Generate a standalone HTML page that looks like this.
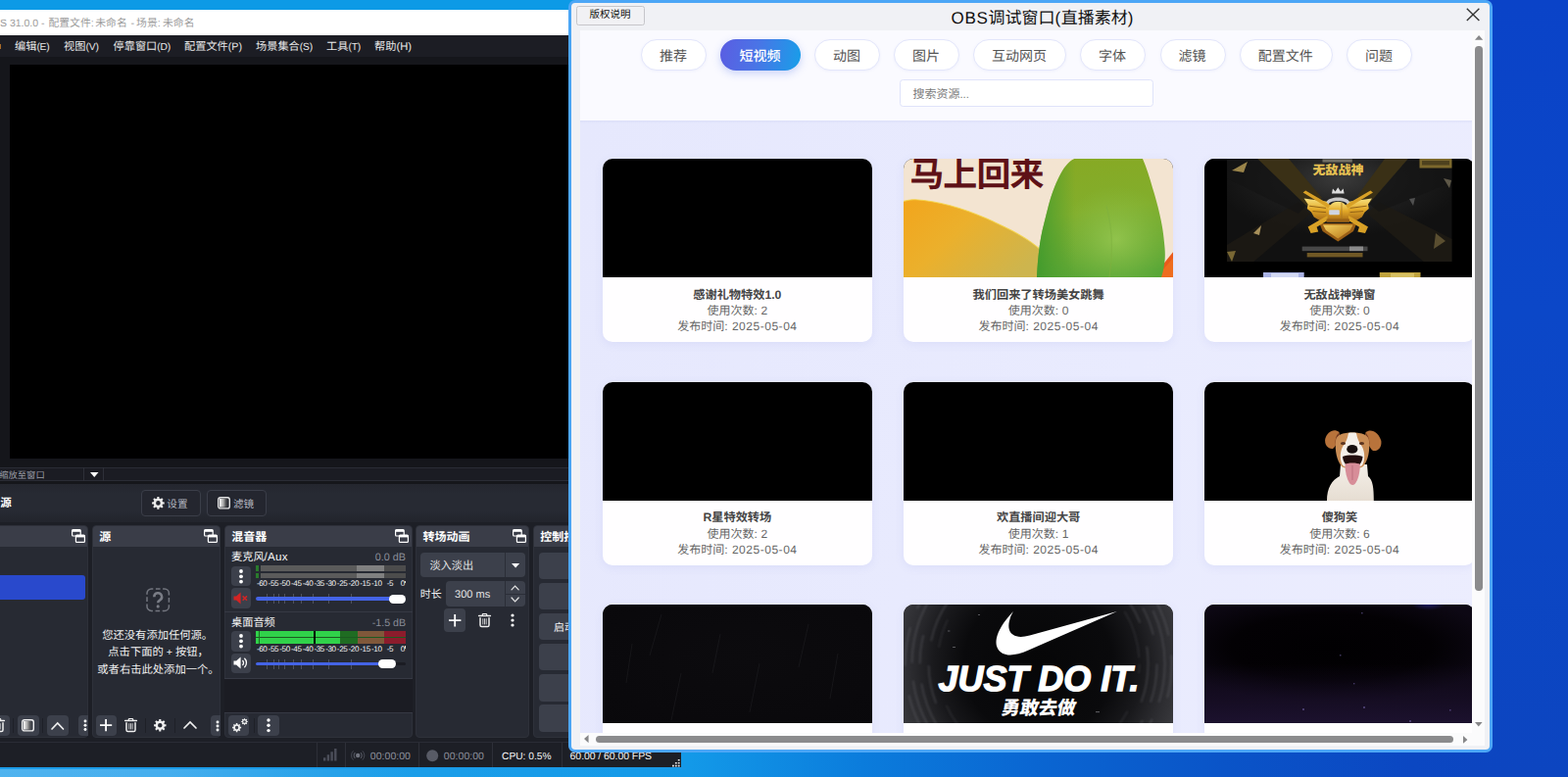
<!DOCTYPE html><html lang="zh"><head><meta charset="utf-8"><title>OBS</title><style>
html,body{margin:0;padding:0}
body{width:1600px;height:793px;overflow:hidden;position:relative;font-family:"Liberation Sans","Noto Sans CJK SC",sans-serif;background:#0b41c4;text-rendering:geometricPrecision}
div{position:absolute;box-sizing:content-box}
.t{white-space:nowrap;overflow:visible}
svg.a{position:absolute;overflow:visible}
</style></head><body><div style="left:0px;top:0px;width:1600px;height:793px;background:linear-gradient(90deg,#1a9fe8 0,#1399e8 44%,#0b7cdc 55%,#0a66d2 66%,#0a54c8 78%,#0b47c2 90%,#0c44c0 100%)"></div><div style="left:0px;top:0px;width:700px;height:12px;background:#0d9ae6"></div><div style="left:1500px;top:0px;width:100px;height:793px;background:linear-gradient(#0a43c8,#0b47c8 40%,#0c45c0)"></div><div style="left:0px;top:783px;width:700px;height:10px;background:linear-gradient(90deg,#4fb3ef 0,#45aeee 25%,#2aa3ea 45%,#1b9ee9 60%,#1399e8 100%)"></div><div style="left:0px;top:783px;width:700px;height:2px;background:linear-gradient(90deg,#1c9ce8,#1898e6)"></div><div style="left:0px;top:10px;width:695px;height:773px;background:#1d1f26"></div><div style="left:0px;top:10px;width:695px;height:26px;background:#fff"></div><div class="t" style="top:16.038px;height:16px;line-height:16px;font-size:10.85px;color:#9c9c9c;left:0px;"><span style="font-size:10.517px;">S 31.0.0 -</span></div><div class="t" style="top:16.038px;height:16px;line-height:16px;font-size:10.85px;color:#9c9c9c;left:49.4px;">配置文件:</div><div class="t" style="top:16.038px;height:16px;line-height:16px;font-size:10.85px;color:#9c9c9c;left:97.2px;">未命名</div><div class="t" style="top:16.038px;height:16px;line-height:16px;font-size:10.85px;color:#9c9c9c;left:133.6px;">-</div><div class="t" style="top:16.038px;height:16px;line-height:16px;font-size:10.85px;color:#9c9c9c;left:139.1px;">场景:</div><div class="t" style="top:16.038px;height:16px;line-height:16px;font-size:10.85px;color:#9c9c9c;left:166px;">未命名</div><div style="left:0px;top:36px;width:695px;height:21.5px;background:#1c1d24"></div><div style="left:0px;top:44.5px;width:1px;height:5px;background:#a86a28"></div><div class="t" style="top:39.975px;height:17px;line-height:17px;font-size:11.2px;color:#e8e8e8;left:15px;">编辑<span style="letter-spacing:-0.212px;font-size:10.304px;">(E)</span></div><div class="t" style="top:39.975px;height:17px;line-height:17px;font-size:11.2px;color:#e8e8e8;left:65px;">视图<span style="letter-spacing:-0.046px;font-size:10.304px;">(V)</span></div><div class="t" style="top:39.975px;height:17px;line-height:17px;font-size:11.2px;color:#e8e8e8;left:115.5px;">停靠窗口<span style="letter-spacing:-0.202px;font-size:10.304px;">(D)</span></div><div class="t" style="top:39.975px;height:17px;line-height:17px;font-size:11.2px;color:#e8e8e8;left:188px;">配置文件<span style="font-size:10.652px;">(P)</span></div><div class="t" style="top:39.975px;height:17px;line-height:17px;font-size:11.2px;color:#e8e8e8;left:261px;">场景集合<span style="letter-spacing:-0.179px;font-size:10.304px;">(S)</span></div><div class="t" style="top:39.975px;height:17px;line-height:17px;font-size:11.2px;color:#e8e8e8;left:333px;">工具<span style="letter-spacing:-0.186px;font-size:10.304px;">(T)</span></div><div class="t" style="top:39.975px;height:17px;line-height:17px;font-size:11.2px;color:#e8e8e8;left:382px;">帮助<span style="letter-spacing:0.017px;">(H)</span></div><div style="left:0px;top:57.5px;width:695px;height:436px;background:#15161b"></div><div style="left:10px;top:65.5px;width:600px;height:402.5px;background:#000"></div><div style="left:0px;top:477px;width:695px;height:13.5px;background:#1b1c23;border-top:1px solid #2a2c35;border-bottom:1px solid #2a2c35;box-sizing:border-box"></div><div style="left:85px;top:477px;width:1px;height:13.5px;background:#2e3039"></div><div style="left:105px;top:477px;width:1px;height:13.5px;background:#2e3039"></div><div class="t" style="top:477.562px;height:15px;line-height:15px;font-size:9.3px;color:#9a9ca6;left:-0.8px;">缩放至窗口</div><svg class="a" style="left:91.5px;top:481.8px" width="8.5" height="5" viewBox="0 0 8.5 5"><path d="M0 0H8.5L4.25 5Z" fill="#fff"/></svg><div style="left:0px;top:493.5px;width:695px;height:39px;background:linear-gradient(#24262e,#272a33 25%,#272a33 70%,#22242c)"></div><div class="t" style="top:506.035px;height:17px;line-height:17px;font-size:11.5px;color:#fff;left:0.3px;"><span style="font-weight:bold">源</span></div><div style="left:143.5px;top:499.5px;width:61.3px;height:27.3px;border:1px solid #3b3e49;border-radius:4px;box-sizing:border-box;background:#24262f"></div><div style="left:211px;top:499.5px;width:61.3px;height:27.3px;border:1px solid #3b3e49;border-radius:4px;box-sizing:border-box;background:#24262f"></div><svg class="a" style="left:153.6px;top:506px" width="14.8" height="14.8" viewBox="0 0 14.8 14.8"><path fill-rule="evenodd" fill="#ececec" d="M11.99 6.25 L13.72 6.40 L13.72 8.40 L11.99 8.55 L11.46 9.83 L12.58 11.16 L11.16 12.58 L9.83 11.46 L8.55 11.99 L8.40 13.72 L6.40 13.72 L6.25 11.99 L4.97 11.46 L3.64 12.58 L2.22 11.16 L3.34 9.83 L2.81 8.55 L1.08 8.40 L1.08 6.40 L2.81 6.25 L3.34 4.97 L2.22 3.64 L3.64 2.22 L4.97 3.34 L6.25 2.81 L6.40 1.08 L8.40 1.08 L8.55 2.81 L9.83 3.34 L11.16 2.22 L12.58 3.64 L11.46 4.97Z M5.10 7.40 a2.30 2.30 0 1 0 4.61 0 a2.30 2.30 0 1 0 -4.61 0Z"/></svg><div class="t" style="top:506.655px;height:16px;line-height:16px;font-size:10.6px;color:#b4b7c0;left:170.3px;">设置</div><svg class="a" style="left:222px;top:507.1px" width="13" height="12.6" viewBox="0 0 13 12.6"><defs><linearGradient id="fg0" x1="0" x2="1"><stop offset="0" stop-color="#fff"/><stop offset=".5" stop-color="#999"/><stop offset="1" stop-color="#333" stop-opacity=".2"/></linearGradient></defs><rect x="2" y="2" width="9" height="8.6" fill="url(#fg0)"/><rect x=".7" y=".7" width="11.6" height="11.2" rx="2.2" fill="none" stroke="#e4e4e4" stroke-width="1.4"/></svg><div class="t" style="top:506.655px;height:16px;line-height:16px;font-size:10.6px;color:#b4b7c0;left:238px;">滤镜</div><div style="left:-10px;top:536px;width:100px;height:217.4px;background:#272a33;border-radius:4px;overflow:hidden;border:1px solid #2e313a;box-sizing:border-box"><div style="left:-1px;top:-1px;width:100px;height:22.3px;background:#3a3d48"></div></div><svg class="a" style="left:72.7px;top:540.2px" width="14" height="14" viewBox="0 0 14 14"><rect x=".6" y=".6" width="8.6" height="6.4" rx="1" fill="none" stroke="#fff" stroke-width="1.2"/><rect x=".6" y=".6" width="8.6" height="2.2" fill="#fff"/><rect x="4.4" y="6" width="9" height="7.4" rx="1" fill="#3a3d48" stroke="#fff" stroke-width="1.2"/><rect x="4.4" y="6" width="9" height="2.4" fill="#fff"/></svg><div style="left:94px;top:536px;width:131px;height:217.4px;background:#272a33;border-radius:4px;overflow:hidden;border:1px solid #2e313a;box-sizing:border-box"><div style="left:-1px;top:-1px;width:131px;height:22.3px;background:#3a3d48"></div></div><div class="t" style="top:538.602px;height:18px;line-height:18px;font-size:12px;color:#fff;left:101.3px;"><span style="font-weight:bold">源</span></div><svg class="a" style="left:207.7px;top:540.2px" width="14" height="14" viewBox="0 0 14 14"><rect x=".6" y=".6" width="8.6" height="6.4" rx="1" fill="none" stroke="#fff" stroke-width="1.2"/><rect x=".6" y=".6" width="8.6" height="2.2" fill="#fff"/><rect x="4.4" y="6" width="9" height="7.4" rx="1" fill="#3a3d48" stroke="#fff" stroke-width="1.2"/><rect x="4.4" y="6" width="9" height="2.4" fill="#fff"/></svg><div style="left:229px;top:536px;width:191.6px;height:217.4px;background:#272a33;border-radius:4px;overflow:hidden;border:1px solid #2e313a;box-sizing:border-box"><div style="left:-1px;top:-1px;width:191.6px;height:22.3px;background:#3a3d48"></div></div><div class="t" style="top:538.602px;height:18px;line-height:18px;font-size:12px;color:#fff;left:236.3px;"><span style="font-weight:bold">混音器</span></div><svg class="a" style="left:403.3px;top:540.2px" width="14" height="14" viewBox="0 0 14 14"><rect x=".6" y=".6" width="8.6" height="6.4" rx="1" fill="none" stroke="#fff" stroke-width="1.2"/><rect x=".6" y=".6" width="8.6" height="2.2" fill="#fff"/><rect x="4.4" y="6" width="9" height="7.4" rx="1" fill="#3a3d48" stroke="#fff" stroke-width="1.2"/><rect x="4.4" y="6" width="9" height="2.4" fill="#fff"/></svg><div style="left:424.3px;top:536px;width:115.7px;height:217.4px;background:#272a33;border-radius:4px;overflow:hidden;border:1px solid #2e313a;box-sizing:border-box"><div style="left:-1px;top:-1px;width:115.7px;height:22.3px;background:#3a3d48"></div></div><div class="t" style="top:538.602px;height:18px;line-height:18px;font-size:12px;color:#fff;left:431.6px;"><span style="font-weight:bold">转场动画</span></div><svg class="a" style="left:522.7px;top:540.2px" width="14" height="14" viewBox="0 0 14 14"><rect x=".6" y=".6" width="8.6" height="6.4" rx="1" fill="none" stroke="#fff" stroke-width="1.2"/><rect x=".6" y=".6" width="8.6" height="2.2" fill="#fff"/><rect x="4.4" y="6" width="9" height="7.4" rx="1" fill="#3a3d48" stroke="#fff" stroke-width="1.2"/><rect x="4.4" y="6" width="9" height="2.4" fill="#fff"/></svg><div style="left:544px;top:536px;width:160px;height:217.4px;background:#272a33;border-radius:4px;overflow:hidden;border:1px solid #2e313a;box-sizing:border-box"><div style="left:-1px;top:-1px;width:160px;height:22.3px;background:#3a3d48"></div></div><div class="t" style="top:538.602px;height:18px;line-height:18px;font-size:12px;color:#fff;left:551.3px;"><span style="font-weight:bold">控制按钮</span></div><div style="left:0px;top:587px;width:87px;height:24.5px;background:#2949cc;border-radius:0 3px 3px 0"></div><div style="left:-12px;top:729.7px;width:21.5px;height:21.4px;background:#3c404b;border-radius:4px"></div><svg class="a" style="left:-8px;top:732.95px" width="13" height="14.5" viewBox="0 0 13 14.5"><path d="M0.6 2.6H12.4" stroke="#f0f0f0" stroke-width="1.5" stroke-linecap="round"/><path d="M4.3 2.2V1.2a.7.7 0 0 1 .7-.7h3a.7.7 0 0 1 .7.7v1" fill="none" stroke="#f0f0f0" stroke-width="1.2"/><path d="M2 4.2V12a1.6 1.6 0 0 0 1.6 1.6h5.8A1.6 1.6 0 0 0 11 12V4.2" fill="none" stroke="#f0f0f0" stroke-width="1.5"/><path d="M4.8 5.2V11.4M6.5 5.2V11.4M8.2 5.2V11.4" stroke="#f0f0f0" stroke-width="1" opacity=".8"/></svg><div style="left:13px;top:733px;width:1px;height:14.5px;background:#1e2027"></div><div style="left:18.3px;top:729.7px;width:21.5px;height:21.4px;background:#3c404b;border-radius:4px"></div><svg class="a" style="left:22px;top:733.5px" width="13" height="12.6" viewBox="0 0 13 12.6"><defs><linearGradient id="fg1" x1="0" x2="1"><stop offset="0" stop-color="#fff"/><stop offset=".5" stop-color="#999"/><stop offset="1" stop-color="#333" stop-opacity=".2"/></linearGradient></defs><rect x="2" y="2" width="9" height="8.6" fill="url(#fg1)"/><rect x=".7" y=".7" width="11.6" height="11.2" rx="2.2" fill="none" stroke="#f0f0f0" stroke-width="1.4"/></svg><div style="left:43.3px;top:733px;width:1px;height:14.5px;background:#1e2027"></div><div style="left:48.3px;top:729.7px;width:21.5px;height:21.4px;background:#3c404b;border-radius:4px"></div><svg class="a" style="left:52.15px;top:736.5px" width="13.5" height="8" viewBox="0 0 13.5 8"><polyline points="1,7 6.75,1 12.5,7" fill="none" stroke="#f0f0f0" stroke-width="1.7" stroke-linecap="round" stroke-linejoin="miter"/></svg><div style="left:80.2px;top:729.7px;width:9.8px;height:21.4px;background:#3c404b;border-radius:4px 0 0 4px"></div><svg class="a" style="left:84.4px;top:733.05px" width="6" height="14.5" viewBox="0 0 6 14.5"><circle cx="3" cy="3" r="1.45" fill="#fff"/><circle cx="3" cy="7.25" r="1.45" fill="#fff"/><circle cx="3" cy="11.5" r="1.45" fill="#fff"/></svg><svg class="a" style="left:149px;top:600px" width="24.4" height="24.4" viewBox="0 0 24.4 24.4"><rect x="1" y="1" width="22.4" height="22.4" rx="4.5" fill="none" stroke="#73767f" stroke-width="1.5" stroke-dasharray="4.6 2.6 10.67 2.6" stroke-dashoffset="16.07"/><path d="M8.3 9.2a3.9 3.9 0 1 1 5.7 3.4c-1.3.7-1.8 1.3-1.8 2.7" fill="none" stroke="#7a7d86" stroke-width="2.5"/><circle cx="12.2" cy="18.9" r="1.55" fill="#7a7d86"/></svg><div class="t" style="top:640.729px;height:17px;line-height:17px;font-size:11.3px;color:#f0f0f0;left:104.2px;">您还没有添加任何源。</div><div class="t" style="top:658.229px;height:17px;line-height:17px;font-size:11.3px;color:#f0f0f0;left:110.3px;">点击下面的<span style="font-size:10.618px;"> + </span>按钮，</div><div class="t" style="top:675.729px;height:17px;line-height:17px;font-size:11.3px;color:#f0f0f0;left:99.3px;">或者右击此处添加一个。</div><div style="left:97.6px;top:729.7px;width:21.5px;height:21.4px;background:#3c404b;border-radius:4px"></div><svg class="a" style="left:102.1px;top:733.8px" width="12.2" height="12.2" viewBox="0 0 12.2 12.2"><path d="M6.1 0V12.2 M0 6.1H12.2" stroke="#fff" stroke-width="1.8"/></svg><svg class="a" style="left:127.1px;top:732.75px" width="13" height="14.5" viewBox="0 0 13 14.5"><path d="M0.6 2.6H12.4" stroke="#f0f0f0" stroke-width="1.5" stroke-linecap="round"/><path d="M4.3 2.2V1.2a.7.7 0 0 1 .7-.7h3a.7.7 0 0 1 .7.7v1" fill="none" stroke="#f0f0f0" stroke-width="1.2"/><path d="M2 4.2V12a1.6 1.6 0 0 0 1.6 1.6h5.8A1.6 1.6 0 0 0 11 12V4.2" fill="none" stroke="#f0f0f0" stroke-width="1.5"/><path d="M4.8 5.2V11.4M6.5 5.2V11.4M8.2 5.2V11.4" stroke="#f0f0f0" stroke-width="1" opacity=".8"/></svg><div style="left:148.3px;top:733px;width:1px;height:14.5px;background:#1e2027"></div><svg class="a" style="left:156.4px;top:732.9px" width="14.6" height="14.6" viewBox="0 0 14.6 14.6"><path fill-rule="evenodd" fill="#f0f0f0" d="M11.82 6.17 L13.52 6.31 L13.52 8.29 L11.82 8.43 L11.30 9.70 L12.40 11.00 L11.00 12.40 L9.70 11.30 L8.43 11.82 L8.29 13.52 L6.31 13.52 L6.17 11.82 L4.90 11.30 L3.60 12.40 L2.20 11.00 L3.30 9.70 L2.78 8.43 L1.08 8.29 L1.08 6.31 L2.78 6.17 L3.30 4.90 L2.20 3.60 L3.60 2.20 L4.90 3.30 L6.17 2.78 L6.31 1.08 L8.29 1.08 L8.43 2.78 L9.70 3.30 L11.00 2.20 L12.40 3.60 L11.30 4.90Z M5.03 7.30 a2.27 2.27 0 1 0 4.54 0 a2.27 2.27 0 1 0 -4.54 0Z"/></svg><div style="left:178px;top:733px;width:1px;height:14.5px;background:#1e2027"></div><svg class="a" style="left:187px;top:736.4px" width="14" height="8" viewBox="0 0 14 8"><polyline points="1,7 7,1 13,7" fill="none" stroke="#f0f0f0" stroke-width="1.7" stroke-linecap="round" stroke-linejoin="miter"/></svg><div style="left:215px;top:729.7px;width:10px;height:21.4px;background:#3c404b;border-radius:4px 0 0 4px"></div><svg class="a" style="left:219.2px;top:733.5px" width="6" height="14" viewBox="0 0 6 14"><circle cx="3" cy="3" r="1.45" fill="#fff"/><circle cx="3" cy="7" r="1.45" fill="#fff"/><circle cx="3" cy="11" r="1.45" fill="#fff"/></svg><div style="left:229px;top:624px;width:191.6px;height:1px;background:#363944"></div><div style="left:229px;top:691.5px;width:191.6px;height:1px;background:#363944"></div><div style="left:229px;top:692.5px;width:191.6px;height:34px;background:#1b1c23"></div><div style="left:229px;top:726.5px;width:191.6px;height:1px;background:#363944"></div><div class="t" style="top:560.075px;height:17px;line-height:17px;font-size:11.2px;color:#f4f4f4;left:236px;">麦克风<span style="letter-spacing:0.222px;font-size:11.6px;">/Aux</span></div><div class="t" style="top:561.082px;height:17px;line-height:17px;font-size:11.4px;color:#8a8d98;left:-186px;width:600px;text-align:right;"><span style="font-size:10.791px;">0.0 dB</span></div><div style="left:235.6px;top:577.7px;width:20.4px;height:20.3px;background:#3c404b;border-radius:4px"></div><svg class="a" style="left:242.9px;top:579.6px" width="6" height="16.6" viewBox="0 0 6 16.6"><circle cx="3" cy="3" r="1.9" fill="#fff"/><circle cx="3" cy="8.3" r="1.9" fill="#fff"/><circle cx="3" cy="13.6" r="1.9" fill="#fff"/></svg><div style="left:235.6px;top:600.4px;width:20.4px;height:20.3px;background:#3c404b;border-radius:4px"></div><div style="left:261.4px;top:577.3px;width:2.6px;height:5.8px;background:#2a7a2c"></div><div style="left:261.4px;top:584.6px;width:2.6px;height:5.8px;background:#2a7a2c"></div><div style="left:266px;top:577.3px;width:98.3px;height:5.8px;background:#5b5b5b"></div><div style="left:266px;top:584.6px;width:98.3px;height:5.8px;background:#5b5b5b"></div><div style="left:364.3px;top:577.3px;width:27.7px;height:5.8px;background:#808080"></div><div style="left:364.3px;top:584.6px;width:27.7px;height:5.8px;background:#808080"></div><div style="left:392px;top:577.3px;width:22px;height:5.8px;background:#4c4c4c"></div><div style="left:392px;top:584.6px;width:22px;height:5.8px;background:#4c4c4c"></div><div class="t" style="top:589.021px;height:14px;line-height:14px;font-size:8.1px;color:#f4f4f4;left:-327.6px;width:600px;text-align:right;letter-spacing:-.4px;">-60</div><div class="t" style="top:589.021px;height:14px;line-height:14px;font-size:8.1px;color:#f4f4f4;left:-315.892px;width:600px;text-align:right;letter-spacing:-.4px;">-55</div><div class="t" style="top:589.021px;height:14px;line-height:14px;font-size:8.1px;color:#f4f4f4;left:-304.183px;width:600px;text-align:right;letter-spacing:-.4px;">-50</div><div class="t" style="top:589.021px;height:14px;line-height:14px;font-size:8.1px;color:#f4f4f4;left:-292.475px;width:600px;text-align:right;letter-spacing:-.4px;">-45</div><div class="t" style="top:589.021px;height:14px;line-height:14px;font-size:8.1px;color:#f4f4f4;left:-280.767px;width:600px;text-align:right;letter-spacing:-.4px;">-40</div><div class="t" style="top:589.021px;height:14px;line-height:14px;font-size:8.1px;color:#f4f4f4;left:-269.058px;width:600px;text-align:right;letter-spacing:-.4px;">-35</div><div class="t" style="top:589.021px;height:14px;line-height:14px;font-size:8.1px;color:#f4f4f4;left:-257.35px;width:600px;text-align:right;letter-spacing:-.4px;">-30</div><div class="t" style="top:589.021px;height:14px;line-height:14px;font-size:8.1px;color:#f4f4f4;left:-245.642px;width:600px;text-align:right;letter-spacing:-.4px;">-25</div><div class="t" style="top:589.021px;height:14px;line-height:14px;font-size:8.1px;color:#f4f4f4;left:-233.933px;width:600px;text-align:right;letter-spacing:-.4px;">-20</div><div class="t" style="top:589.021px;height:14px;line-height:14px;font-size:8.1px;color:#f4f4f4;left:-222.225px;width:600px;text-align:right;letter-spacing:-.4px;">-15</div><div class="t" style="top:589.021px;height:14px;line-height:14px;font-size:8.1px;color:#f4f4f4;left:-210.517px;width:600px;text-align:right;letter-spacing:-.4px;">-10</div><div class="t" style="top:589.021px;height:14px;line-height:14px;font-size:8.1px;color:#f4f4f4;left:-198.808px;width:600px;text-align:right;letter-spacing:-.4px;">-5</div><div class="t" style="top:589.021px;height:14px;line-height:14px;font-size:8.1px;color:#f4f4f4;left:-187.1px;width:600px;text-align:right;letter-spacing:-.4px;">0</div><div style="left:413.2px;top:592.5px;width:0.8px;height:2.5px;background:#ddd"></div><div style="left:272.4px;top:606.1px;width:1px;height:10.4px;background:#50535e"></div><div style="left:278.5px;top:606.1px;width:1px;height:10.4px;background:#50535e"></div><div style="left:283.8px;top:606.1px;width:1px;height:10.4px;background:#50535e"></div><div style="left:290.1px;top:606.1px;width:1px;height:10.4px;background:#50535e"></div><div style="left:298.6px;top:606.1px;width:1px;height:10.4px;background:#50535e"></div><div style="left:307.1px;top:606.1px;width:1px;height:10.4px;background:#50535e"></div><div style="left:319.3px;top:606.1px;width:1px;height:10.4px;background:#50535e"></div><div style="left:335.1px;top:606.1px;width:1px;height:10.4px;background:#50535e"></div><div style="left:357.5px;top:606.1px;width:1px;height:10.4px;background:#50535e"></div><div style="left:261.4px;top:609.4px;width:152.6px;height:3.4px;background:#1b1c23;border-radius:2px"></div><div style="left:261.4px;top:609.4px;width:139.2px;height:3.4px;background:#4464e6;border-radius:2px"></div><div style="left:396.6px;top:606.6px;width:17.4px;height:9px;background:#fff;border-radius:4.5px"></div><div class="t" style="top:627.575px;height:17px;line-height:17px;font-size:11.2px;color:#f4f4f4;left:236px;">桌面音频</div><div class="t" style="top:628.082px;height:17px;line-height:17px;font-size:11.4px;color:#8a8d98;left:-186px;width:600px;text-align:right;"><span style="font-size:10.638px;">-1.5 dB</span></div><div style="left:235.6px;top:644.3px;width:20.4px;height:20.3px;background:#3c404b;border-radius:4px"></div><svg class="a" style="left:242.9px;top:646.2px" width="6" height="16.6" viewBox="0 0 6 16.6"><circle cx="3" cy="3" r="1.9" fill="#fff"/><circle cx="3" cy="8.3" r="1.9" fill="#fff"/><circle cx="3" cy="13.6" r="1.9" fill="#fff"/></svg><div style="left:235.6px;top:667px;width:20.4px;height:20.3px;background:#3c404b;border-radius:4px"></div><div style="left:261.4px;top:643.9px;width:85.3px;height:5.8px;background:#30d24a"></div><div style="left:261.4px;top:651.2px;width:85.3px;height:5.8px;background:#30d24a"></div><div style="left:346.7px;top:643.9px;width:18.3px;height:5.8px;background:#1f6c22"></div><div style="left:346.7px;top:651.2px;width:18.3px;height:5.8px;background:#1f6c22"></div><div style="left:365px;top:643.9px;width:27px;height:5.8px;background:#80583a"></div><div style="left:365px;top:651.2px;width:27px;height:5.8px;background:#80583a"></div><div style="left:392px;top:643.9px;width:22px;height:5.8px;background:#8c1c2c"></div><div style="left:392px;top:651.2px;width:22px;height:5.8px;background:#8c1c2c"></div><div style="left:261.4px;top:649.7px;width:152.6px;height:1.5px;background:#1c5a20"></div><div style="left:319.6px;top:643.9px;width:2.2px;height:13.1px;background:#000"></div><div style="left:264.2px;top:643.9px;width:1.3px;height:13.1px;background:#1c6a22"></div><div class="t" style="top:655.621px;height:14px;line-height:14px;font-size:8.1px;color:#f4f4f4;left:-327.6px;width:600px;text-align:right;letter-spacing:-.4px;">-60</div><div class="t" style="top:655.621px;height:14px;line-height:14px;font-size:8.1px;color:#f4f4f4;left:-315.892px;width:600px;text-align:right;letter-spacing:-.4px;">-55</div><div class="t" style="top:655.621px;height:14px;line-height:14px;font-size:8.1px;color:#f4f4f4;left:-304.183px;width:600px;text-align:right;letter-spacing:-.4px;">-50</div><div class="t" style="top:655.621px;height:14px;line-height:14px;font-size:8.1px;color:#f4f4f4;left:-292.475px;width:600px;text-align:right;letter-spacing:-.4px;">-45</div><div class="t" style="top:655.621px;height:14px;line-height:14px;font-size:8.1px;color:#f4f4f4;left:-280.767px;width:600px;text-align:right;letter-spacing:-.4px;">-40</div><div class="t" style="top:655.621px;height:14px;line-height:14px;font-size:8.1px;color:#f4f4f4;left:-269.058px;width:600px;text-align:right;letter-spacing:-.4px;">-35</div><div class="t" style="top:655.621px;height:14px;line-height:14px;font-size:8.1px;color:#f4f4f4;left:-257.35px;width:600px;text-align:right;letter-spacing:-.4px;">-30</div><div class="t" style="top:655.621px;height:14px;line-height:14px;font-size:8.1px;color:#f4f4f4;left:-245.642px;width:600px;text-align:right;letter-spacing:-.4px;">-25</div><div class="t" style="top:655.621px;height:14px;line-height:14px;font-size:8.1px;color:#f4f4f4;left:-233.933px;width:600px;text-align:right;letter-spacing:-.4px;">-20</div><div class="t" style="top:655.621px;height:14px;line-height:14px;font-size:8.1px;color:#f4f4f4;left:-222.225px;width:600px;text-align:right;letter-spacing:-.4px;">-15</div><div class="t" style="top:655.621px;height:14px;line-height:14px;font-size:8.1px;color:#f4f4f4;left:-210.517px;width:600px;text-align:right;letter-spacing:-.4px;">-10</div><div class="t" style="top:655.621px;height:14px;line-height:14px;font-size:8.1px;color:#f4f4f4;left:-198.808px;width:600px;text-align:right;letter-spacing:-.4px;">-5</div><div class="t" style="top:655.621px;height:14px;line-height:14px;font-size:8.1px;color:#f4f4f4;left:-187.1px;width:600px;text-align:right;letter-spacing:-.4px;">0</div><div style="left:413.2px;top:659.1px;width:0.8px;height:2.5px;background:#ddd"></div><div style="left:272.4px;top:672.7px;width:1px;height:10.4px;background:#50535e"></div><div style="left:278.5px;top:672.7px;width:1px;height:10.4px;background:#50535e"></div><div style="left:283.8px;top:672.7px;width:1px;height:10.4px;background:#50535e"></div><div style="left:290.1px;top:672.7px;width:1px;height:10.4px;background:#50535e"></div><div style="left:298.6px;top:672.7px;width:1px;height:10.4px;background:#50535e"></div><div style="left:307.1px;top:672.7px;width:1px;height:10.4px;background:#50535e"></div><div style="left:319.3px;top:672.7px;width:1px;height:10.4px;background:#50535e"></div><div style="left:335.1px;top:672.7px;width:1px;height:10.4px;background:#50535e"></div><div style="left:357.5px;top:672.7px;width:1px;height:10.4px;background:#50535e"></div><div style="left:261.4px;top:676px;width:152.6px;height:3.4px;background:#1b1c23;border-radius:2px"></div><div style="left:261.4px;top:676px;width:128.8px;height:3.4px;background:#4464e6;border-radius:2px"></div><div style="left:386.2px;top:673.2px;width:17.4px;height:9px;background:#fff;border-radius:4.5px"></div><svg class="a" style="left:237.6px;top:603.8px" width="15" height="13" viewBox="0 0 15 13"><path d="M0.5 4.4h2.6L7.6 0.6v11.8L3.1 8.6H0.5z" fill="#d32424"/><path d="M9.6 4.4l4.4 4.4M14 4.4l-4.4 4.4" stroke="#d32424" stroke-width="1.5"/></svg><svg class="a" style="left:238.3px;top:670.4px" width="15.4" height="13" viewBox="0 0 15.4 13"><path d="M0.5 4.4h2.6L7.6 0.6v11.8L3.1 8.6H0.5z" fill="#fff"/><path d="M9.4 4a3.4 3.4 0 0 1 0 5" fill="none" stroke="#fff" stroke-width="1.3"/><path d="M11.4 1.8a6.4 6.4 0 0 1 0 9.4" fill="none" stroke="#fff" stroke-width="1.3"/></svg><div style="left:232.8px;top:729.9px;width:21.7px;height:21.4px;background:#3c404b;border-radius:4px"></div><svg class="a" style="left:235.6px;top:736.6px" width="11.2" height="11.2" viewBox="0 0 11.2 11.2"><path fill-rule="evenodd" fill="#f0f0f0" d="M8.90 4.77 L10.14 4.88 L10.14 6.32 L8.90 6.43 L8.52 7.35 L9.32 8.30 L8.30 9.32 L7.35 8.52 L6.43 8.90 L6.32 10.14 L4.88 10.14 L4.77 8.90 L3.85 8.52 L2.90 9.32 L1.88 8.30 L2.68 7.35 L2.30 6.43 L1.06 6.32 L1.06 4.88 L2.30 4.77 L2.68 3.85 L1.88 2.90 L2.90 1.88 L3.85 2.68 L4.77 2.30 L4.88 1.06 L6.32 1.06 L6.43 2.30 L7.35 2.68 L8.30 1.88 L9.32 2.90 L8.52 3.85Z M3.94 5.60 a1.66 1.66 0 1 0 3.31 0 a1.66 1.66 0 1 0 -3.31 0Z"/></svg><svg class="a" style="left:246.2px;top:732.6px" width="7" height="7" viewBox="0 0 7 7"><path fill-rule="evenodd" fill="#f0f0f0" d="M5.93 2.89 L6.76 2.98 L6.76 4.02 L5.93 4.11 L5.64 4.79 L6.17 5.44 L5.44 6.17 L4.79 5.64 L4.11 5.93 L4.02 6.76 L2.98 6.76 L2.89 5.93 L2.21 5.64 L1.56 6.17 L0.83 5.44 L1.36 4.79 L1.07 4.11 L0.24 4.02 L0.24 2.98 L1.07 2.89 L1.36 2.21 L0.83 1.56 L1.56 0.83 L2.21 1.36 L2.89 1.07 L2.98 0.24 L4.02 0.24 L4.11 1.07 L4.79 1.36 L5.44 0.83 L6.17 1.56 L5.64 2.21Z M2.20 3.50 a1.30 1.30 0 1 0 2.60 0 a1.30 1.30 0 1 0 -2.60 0Z"/></svg><div style="left:258.5px;top:733px;width:1px;height:14.5px;background:#1e2027"></div><div style="left:263px;top:729.9px;width:21.8px;height:21.4px;background:#3c404b;border-radius:4px"></div><svg class="a" style="left:270.8px;top:732.2px" width="6" height="16.6" viewBox="0 0 6 16.6"><circle cx="3" cy="3" r="1.7" fill="#fff"/><circle cx="3" cy="8.3" r="1.7" fill="#fff"/><circle cx="3" cy="13.6" r="1.7" fill="#fff"/></svg><div style="left:428.5px;top:563.6px;width:107.5px;height:25.7px;background:#3c404b;border-radius:4px"></div><div style="left:515.2px;top:563.6px;width:1px;height:25.7px;background:#2b2e38"></div><div class="t" style="top:569.875px;height:17px;line-height:17px;font-size:11.2px;color:#e4e4e4;left:438.4px;">淡入淡出</div><svg class="a" style="left:522px;top:574.6px" width="8.2" height="4.6" viewBox="0 0 8.2 4.6"><path d="M0 0H8.2L4.1 4.6Z" fill="#fff"/></svg><div class="t" style="top:599.369px;height:17px;line-height:17px;font-size:11px;color:#f0f0f0;left:428.8px;">时长</div><div style="left:454.7px;top:593px;width:81.3px;height:26px;background:#3c404b;border-radius:4px"></div><div style="left:515.2px;top:593px;width:1px;height:26px;background:#2b2e38"></div><div style="left:515.2px;top:605.5px;width:20.8px;height:1px;background:#2b2e38"></div><div class="t" style="top:598.969px;height:17px;line-height:17px;font-size:11px;color:#e4e4e4;left:464px;"><span style="letter-spacing:0.038px;">300 ms</span></div><svg class="a" style="left:521px;top:597.1px" width="9.2" height="5.8" viewBox="0 0 9.2 5.8"><polyline points="1,4.8 4.6,1 8.2,4.8" fill="none" stroke="#e4e4e4" stroke-width="1.2" stroke-linecap="round" stroke-linejoin="miter"/></svg><svg class="a" style="left:521px;top:609.1px" width="9.2" height="5.8" viewBox="0 0 9.2 5.8"><polyline points="1,1 4.6,4.8 8.2,1" fill="none" stroke="#e4e4e4" stroke-width="1.2" stroke-linecap="round" stroke-linejoin="miter"/></svg><div style="left:452.8px;top:621.2px;width:22.6px;height:23.5px;background:#3c404b;border-radius:4px"></div><svg class="a" style="left:457.9px;top:626.6px" width="12.4" height="12.4" viewBox="0 0 12.4 12.4"><path d="M6.2 0V12.4 M0 6.2H12.4" stroke="#fff" stroke-width="1.8"/></svg><svg class="a" style="left:487.6px;top:625.55px" width="13" height="14.5" viewBox="0 0 13 14.5"><path d="M0.6 2.6H12.4" stroke="#f0f0f0" stroke-width="1.5" stroke-linecap="round"/><path d="M4.3 2.2V1.2a.7.7 0 0 1 .7-.7h3a.7.7 0 0 1 .7.7v1" fill="none" stroke="#f0f0f0" stroke-width="1.2"/><path d="M2 4.2V12a1.6 1.6 0 0 0 1.6 1.6h5.8A1.6 1.6 0 0 0 11 12V4.2" fill="none" stroke="#f0f0f0" stroke-width="1.5"/><path d="M4.8 5.2V11.4M6.5 5.2V11.4M8.2 5.2V11.4" stroke="#f0f0f0" stroke-width="1" opacity=".8"/></svg><svg class="a" style="left:520px;top:624.8px" width="6" height="16" viewBox="0 0 6 16"><circle cx="3" cy="3" r="1.6" fill="#fff"/><circle cx="3" cy="8" r="1.6" fill="#fff"/><circle cx="3" cy="13" r="1.6" fill="#fff"/></svg><div style="left:550px;top:563.6px;width:140px;height:27.6px;background:#3c404b;border-radius:4px"></div><div style="left:550px;top:594.7px;width:140px;height:27.6px;background:#3c404b;border-radius:4px"></div><div style="left:550px;top:625.8px;width:140px;height:27.6px;background:#3c404b;border-radius:4px"></div><div style="left:550px;top:656.9px;width:140px;height:27.6px;background:#3c404b;border-radius:4px"></div><div style="left:550px;top:688px;width:140px;height:27.6px;background:#3c404b;border-radius:4px"></div><div style="left:550px;top:719.1px;width:140px;height:27.6px;background:#3c404b;border-radius:4px"></div><div class="t" style="top:632.969px;height:17px;line-height:17px;font-size:11px;color:#f0f0f0;left:565px;">启动</div><div style="left:0px;top:757px;width:695px;height:1px;background:#2a2c35"></div><div style="left:322.5px;top:758px;width:1px;height:25px;background:#2d2f38"></div><div style="left:351.5px;top:758px;width:1px;height:25px;background:#2d2f38"></div><div style="left:426.5px;top:758px;width:1px;height:25px;background:#2d2f38"></div><div style="left:501.5px;top:758px;width:1px;height:25px;background:#2d2f38"></div><div style="left:573.3px;top:758px;width:1px;height:25px;background:#2d2f38"></div><svg class="a" style="left:330px;top:764.4px" width="13.5" height="12.4" viewBox="0 0 13.5 12.4"><path d="M0 9.2h2.4v3.2H0z M3.7 6.2h2.4v6.2H3.7z M7.4 3.2h2.4v9.2H7.4z M11.1 0h2.4v12.4h-2.4z" fill="#4b4e59"/></svg><svg class="a" style="left:359px;top:764.8px" width="12.4" height="12" viewBox="0 0 12.4 12"><circle cx="6.2" cy="6" r="2.2" fill="#70737e"/><path d="M3.4 3.1a4 4 0 0 0 0 5.8M9 3.1a4 4 0 0 1 0 5.8" fill="none" stroke="#565964" stroke-width="1.1"/><path d="M1.5 1.4a6.4 6.4 0 0 0 0 9.2M10.9 1.4a6.4 6.4 0 0 1 0 9.2" fill="none" stroke="#454852" stroke-width="1"/></svg><div class="t" style="top:764.302px;height:16px;line-height:16px;font-size:10.5px;color:#8d909b;left:377.8px;"><span style="letter-spacing:0.041px;">00:00:00</span></div><svg class="a" style="left:434.6px;top:764.7px" width="12.4" height="12.4" viewBox="0 0 12.4 12.4"><circle cx="6.2" cy="6.2" r="6" fill="#585b66"/></svg><div class="t" style="top:764.302px;height:16px;line-height:16px;font-size:10.5px;color:#8d909b;left:452.8px;"><span style="letter-spacing:0.041px;">00:00:00</span></div><div class="t" style="top:764.302px;height:16px;line-height:16px;font-size:10.5px;color:#f4f4f4;left:512px;"><span style="font-size:10.23px;">CPU: 0.5%</span></div><div class="t" style="top:764.302px;height:16px;line-height:16px;font-size:10.5px;color:#f4f4f4;left:581.6px;"><span style="letter-spacing:-0.073px;">60.00 / 60.00 FPS</span></div><svg class="a" style="left:685.6px;top:774.7px" width="7.8" height="7.4" viewBox="0 0 7.8 7.4"><path d="M5.8 0h1.8v1.6H5.8z M2.9 2.9h1.8v1.6H2.9z M5.8 2.9h1.8v1.6H5.8z M0 5.8h1.8v1.6H0z M2.9 5.8h1.8v1.6H2.9z M5.8 5.8h1.8v1.6H5.8z" fill="#e8e8e8"/></svg><div style="left:580px;top:-0.4px;width:943px;height:768.4px;background:#f0f1f5;border:3.6px solid #4ba6f6;border-radius:7px;box-sizing:border-box"></div><div style="left:588px;top:6px;width:69.5px;height:20px;background:#f1f1f4;border:1px solid #c6c6ca;border-radius:2.5px;box-sizing:border-box"></div><div class="t" style="top:6.802px;height:16px;line-height:16px;font-size:10.5px;color:#111;left:322.4px;width:600px;text-align:center;">版权说明</div><div class="t" style="top:7.269px;height:23px;line-height:23px;font-size:17px;color:#101010;left:970.6px;"><span style="letter-spacing:0.635px;">OBS</span>调试窗口<span style="letter-spacing:0.635px;">(</span>直播素材<span style="letter-spacing:0.635px;">)</span></div><svg class="a" style="left:1496.3px;top:7.6px" width="14.2" height="13.8" viewBox="0 0 14.2 13.8"><path d="M.8 .8L13.4 13M13.4 .8L.8 13" stroke="#333" stroke-width="1.35" fill="none"/></svg><div style="left:592px;top:31px;width:923px;height:730px;overflow:hidden"><div style="left:0px;top:0px;width:923px;height:92.3px;background:#fafaff"></div><div style="left:0px;top:92.3px;width:909.9px;height:625px;background:linear-gradient(100deg,#e6e8fd,#e9ebfe 60%,#ecedfe)"></div><div style="left:0px;top:92.3px;width:909.9px;height:3px;background:linear-gradient(rgba(200,205,240,.35),rgba(200,205,240,0))"></div><div style="left:62px;top:8.8px;width:67px;height:31.9px;border-radius:16px;background:#fff;border:1px solid #e3e6fb;box-sizing:border-box;box-shadow:0 1px 3px rgba(120,130,220,.08)"></div><div class="t" style="top:15.669px;height:20px;line-height:20px;font-size:14px;color:#555;left:-205px;width:600px;text-align:center;">推荐</div><div style="left:143.2px;top:8.8px;width:81.4px;height:31.9px;border-radius:16px;background:linear-gradient(100deg,#5b5de2 0%,#4a74e6 45%,#179fe9 100%);box-shadow:0 3px 9px rgba(80,110,230,.28)"></div><div class="t" style="top:15.669px;height:20px;line-height:20px;font-size:14px;color:#fff;left:-116.6px;width:600px;text-align:center;"><span style="font-weight:500">短视频</span></div><div style="left:239px;top:8.8px;width:67px;height:31.9px;border-radius:16px;background:#fff;border:1px solid #e3e6fb;box-sizing:border-box;box-shadow:0 1px 3px rgba(120,130,220,.08)"></div><div class="t" style="top:15.669px;height:20px;line-height:20px;font-size:14px;color:#555;left:-28px;width:600px;text-align:center;">动图</div><div style="left:320px;top:8.8px;width:67px;height:31.9px;border-radius:16px;background:#fff;border:1px solid #e3e6fb;box-sizing:border-box;box-shadow:0 1px 3px rgba(120,130,220,.08)"></div><div class="t" style="top:15.669px;height:20px;line-height:20px;font-size:14px;color:#555;left:53px;width:600px;text-align:center;">图片</div><div style="left:401px;top:8.8px;width:95px;height:31.9px;border-radius:16px;background:#fff;border:1px solid #e3e6fb;box-sizing:border-box;box-shadow:0 1px 3px rgba(120,130,220,.08)"></div><div class="t" style="top:15.669px;height:20px;line-height:20px;font-size:14px;color:#555;left:148px;width:600px;text-align:center;">互动网页</div><div style="left:510px;top:8.8px;width:67px;height:31.9px;border-radius:16px;background:#fff;border:1px solid #e3e6fb;box-sizing:border-box;box-shadow:0 1px 3px rgba(120,130,220,.08)"></div><div class="t" style="top:15.669px;height:20px;line-height:20px;font-size:14px;color:#555;left:243px;width:600px;text-align:center;">字体</div><div style="left:591.5px;top:8.8px;width:67px;height:31.9px;border-radius:16px;background:#fff;border:1px solid #e3e6fb;box-sizing:border-box;box-shadow:0 1px 3px rgba(120,130,220,.08)"></div><div class="t" style="top:15.669px;height:20px;line-height:20px;font-size:14px;color:#555;left:324.5px;width:600px;text-align:center;">滤镜</div><div style="left:673px;top:8.8px;width:94.5px;height:31.9px;border-radius:16px;background:#fff;border:1px solid #e3e6fb;box-sizing:border-box;box-shadow:0 1px 3px rgba(120,130,220,.08)"></div><div class="t" style="top:15.669px;height:20px;line-height:20px;font-size:14px;color:#555;left:419.75px;width:600px;text-align:center;">配置文件</div><div style="left:782px;top:8.8px;width:67px;height:31.9px;border-radius:16px;background:#fff;border:1px solid #e3e6fb;box-sizing:border-box;box-shadow:0 1px 3px rgba(120,130,220,.08)"></div><div class="t" style="top:15.669px;height:20px;line-height:20px;font-size:14px;color:#555;left:515px;width:600px;text-align:center;">问题</div><div style="left:326.2px;top:49.9px;width:259px;height:28.5px;background:#fff;border:1px solid #dfe3fa;border-radius:3.5px;box-sizing:border-box"></div><div class="t" style="top:56.002px;height:18px;line-height:18px;font-size:12px;color:#7c7c7c;left:339.4px;">搜索资源<span style="font-size:11.399px;">...</span></div><div style="left:22.7px;top:130.8px;width:275.3px;height:187.6px;background:#fffeff;border-radius:10px;overflow:hidden;box-shadow:0 2px 10px rgba(110,120,210,.10)"><div style="left:0px;top:0px;width:275.3px;height:121.2px;background:#000;overflow:hidden"></div></div><div class="t" style="top:260.509px;height:18px;line-height:18px;font-size:12.2px;color:#454545;font-weight:bold;left:-139.65px;width:600px;text-align:center;">感谢礼物特效1.0</div><div class="t" style="top:276.802px;height:18px;line-height:18px;font-size:12px;color:#666;left:-139.65px;width:600px;text-align:center;">使用次数<span style="letter-spacing:0.086px;">: 2</span></div><div class="t" style="top:293.202px;height:18px;line-height:18px;font-size:12px;color:#666;left:-139.65px;width:600px;text-align:center;">发布时间<span style="letter-spacing:0.529px;">: 2025-05-04</span></div><div style="left:330px;top:130.8px;width:275.3px;height:187.6px;background:#fffeff;border-radius:10px;overflow:hidden;box-shadow:0 2px 10px rgba(110,120,210,.10)"><div style="left:0px;top:0px;width:275.3px;height:121.2px;background:#000;overflow:hidden"><svg class="a" style="left:0;top:0" width="275.3" height="121.2" viewBox="0 0 275.3 121.2"><defs><linearGradient id="hill" x1="0" y1="0" x2="1" y2=".55"><stop offset="0" stop-color="#f2a51c"/><stop offset=".45" stop-color="#ebb02c"/><stop offset="1" stop-color="#cdb54e"/></linearGradient><linearGradient id="leaf" x1=".3" y1="0" x2=".45" y2="1"><stop offset="0" stop-color="#87a924"/><stop offset=".45" stop-color="#82ae2c"/><stop offset="1" stop-color="#58a636"/></linearGradient><radialGradient id="leafhi" cx=".62" cy=".68" r=".45"><stop offset="0" stop-color="#9ccb55" stop-opacity=".75"/><stop offset="1" stop-color="#8cc04a" stop-opacity="0"/></radialGradient><linearGradient id="leafsh" x1="0" y1="0" x2="1" y2="0"><stop offset="0" stop-color="#3f9a2c" stop-opacity=".9"/><stop offset=".3" stop-color="#4a9e30" stop-opacity="0"/></linearGradient></defs><rect width="275.3" height="121.2" fill="#f3e4d1"/><path d="M0 43.4C4 42.2 8 41.6 12 41.8C24 42.6 36 44.8 47.4 47.8C60 51.2 72 55.6 83.6 60.6C93 64.8 102 69 110.8 73.6C117 77 123 80.4 129 84.4C132 86.6 135 88.8 138 91.4L150 121.2H0Z" fill="url(#hill)"/><path d="M0 43.4C4 42.2 8 41.6 12 41.8C24 42.6 36 44.8 47.4 47.8C60 51.2 72 55.6 83.6 60.6C93 64.8 102 69 110.8 73.6C117 77 123 80.4 129 84.4C132 86.6 135 88.8 138 91.4" fill="none" stroke="#f6d648" stroke-width="1.1" opacity=".85"/><path d="M254 121.2L275.3 95V121.2Z" fill="#ea5a1c"/><path d="M258 121.2L275.3 101V121.2Z" fill="#f07a20" opacity=".6"/><path d="M136 121.2C137 100 139 82 143.4 65.7C147 52 149 42 152.5 33C157 21 161 13 165.2 7.7C168 4 171 1.5 174.3 0H244C248 9 251 19 254 29.5C257 39 259.5 48 261.3 56.6C263.5 66 265 75 265.8 83.8C266.6 91 267 96 266.7 102C266.3 109 265 115 263 121.2Z" fill="url(#leaf)"/><path d="M136 121.2C137 100 139 82 143.4 65.7C147 52 149 42 152.5 33C157 21 161 13 165.2 7.7C168 4 171 1.5 174.3 0H244C248 9 251 19 254 29.5C257 39 259.5 48 261.3 56.6C263.5 66 265 75 265.8 83.8C266.6 91 267 96 266.7 102C266.3 109 265 115 263 121.2Z" fill="url(#leafhi)"/><path d="M136 121.2C137 100 139 82 143.4 65.7C147 52 149 42 152.5 33C157 21 161 13 165.2 7.7C168 4 171 1.5 174.3 0H244C248 9 251 19 254 29.5C257 39 259.5 48 261.3 56.6C263.5 66 265 75 265.8 83.8C266.6 91 267 96 266.7 102C266.3 109 265 115 263 121.2Z" fill="url(#leafsh)"/><path d="M210 121C214 95 213 70 207 48" fill="none" stroke="#7fb040" stroke-width="1.2" opacity=".6"/><g transform="translate(0 0) scale(1 1)"><text x="6.2" y="27.6" font-family="Liberation Sans, Noto Sans CJK SC, sans-serif" font-size="35" font-weight="bold" letter-spacing="-0.875" fill="#5e1117">马上回来</text></g></svg></div></div><div class="t" style="top:260.509px;height:18px;line-height:18px;font-size:12.2px;color:#454545;font-weight:bold;left:167.65px;width:600px;text-align:center;">我们回来了转场美女跳舞</div><div class="t" style="top:276.802px;height:18px;line-height:18px;font-size:12px;color:#666;left:167.65px;width:600px;text-align:center;">使用次数<span style="letter-spacing:0.086px;">: 0</span></div><div class="t" style="top:293.202px;height:18px;line-height:18px;font-size:12px;color:#666;left:167.65px;width:600px;text-align:center;">发布时间<span style="letter-spacing:0.529px;">: 2025-05-04</span></div><div style="left:637.3px;top:130.8px;width:275.3px;height:187.6px;background:#fffeff;border-radius:10px;overflow:hidden;box-shadow:0 2px 10px rgba(110,120,210,.10)"><div style="left:0px;top:0px;width:275.3px;height:121.2px;background:#000;overflow:hidden"><svg class="a" style="left:0;top:0" width="275.3" height="121.2" viewBox="0 0 275.3 121.2"><defs><linearGradient id="gold" x1="0" y1="0" x2="0" y2="1"><stop offset="0" stop-color="#f8e27e"/><stop offset=".5" stop-color="#e2a828"/><stop offset="1" stop-color="#a86c18"/></linearGradient><linearGradient id="gold2" x1="0" y1="0" x2="1" y2="1"><stop offset="0" stop-color="#f4d060"/><stop offset="1" stop-color="#b87818"/></linearGradient><radialGradient id="g3bg" cx=".5" cy=".2" r=".55"><stop offset="0" stop-color="#3a3a3a"/><stop offset=".5" stop-color="#1f1f1f"/><stop offset="1" stop-color="#111"/></radialGradient><clipPath id="c3"><rect x="22.9" y="0" width="229.8" height="105.2"/></clipPath><filter id="b3" x="-5%" y="-5%" width="110%" height="110%"><feGaussianBlur stdDeviation=".45"/></filter></defs><rect width="275.3" height="121.2" fill="#000"/><g clip-path="url(#c3)"><rect x="22.9" y="0" width="229.8" height="105.2" fill="url(#g3bg)"/><path d="M54 0H86L120 40L104 48Z" fill="#3a3016"/><path d="M184 0H208L168 46L156 38Z" fill="#3a3016"/><path d="M22.9 105.2V88L96 44L108 56L50 105.2Z" fill="#1d1a14" opacity=".85"/><path d="M252.7 105.2V82L178 44L166 56L224 105.2Z" fill="#1e1b14" opacity=".85"/><path d="M22.9 0H54L104 48L96 56L22.9 20Z" fill="#141414" opacity=".7"/><path d="M252.7 0H208L168 46L178 54L252.7 24Z" fill="#141414" opacity=".7"/><path d="M28 12L44 3L40 14Z" fill="#9a844a"/><path d="M50 76L58 68L56 78Z" fill="#a8905a"/><path d="M23 95L32 94L28 105Z" fill="#7a6834"/><path d="M236 76L246 84L234 92Z" fill="#5a4e30"/><path d="M244 20L252 22L250 30Z" fill="#5e5848"/><path d="M209 41L215 40L213 48Z" fill="#505050"/><rect x="219.5" y="0" width="33.2" height="9.5" fill="#7c682c"/><rect x="222" y="2" width="28" height="4.5" fill="#4e411e"/><g filter="url(#b3)"><path d="M117.4 66L155.2 66L152 74L136.3 84.6L120.6 74Z" fill="#9a5e14"/><path d="M121 67.5H151.6L148.6 73L136.3 81.4L124 73Z" fill="url(#gold2)"/><path d="M127 44L101.6 40.6L105.6 46.4L104.8 51L109 54.4L111.8 59.5L117.6 63L127 61Z" fill="url(#gold)"/><path d="M145.6 44L171 40.6L167 46.4L167.8 51L163.6 54.4L160.8 59.5L155 63L145.6 61Z" fill="url(#gold)"/><path d="M107 48.2L124 50.4M110.5 53.6L124 54.6M165.6 48.2L148.6 50.4M162.1 53.6L148.6 54.6" stroke="#8a5a14" stroke-width=".9" fill="none"/><path d="M100.6 34.6L103.2 32.6L167 69.6L164 76L156.4 74.4L158 69.8Z" fill="#d9a126"/><path d="M172 34.6L169.4 32.6L105.6 69.6L108.6 76L116.2 74.4L114.6 69.8Z" fill="#d9a126"/><path d="M124.6 44C127 38 145.6 38 148 44L146 46.4C143 42 129.6 42 126.6 46.4Z" fill="#c9c9c9"/><path d="M125.6 54.6a10.7 10.9 0 0 1 21.4 0v8.4h-21.4z" fill="url(#gold)"/><path d="M124.6 61.4h23.4v3.4h-23.4z" fill="#9c6416"/><rect x="127.2" y="52.2" width="10.6" height="5" rx=".8" fill="#cfd5e2"/><path d="M140 45v17" stroke="#a8741c" stroke-width=".8"/><path d="M130 35.6L131 30.6L133.6 33.4L136.3 29.2L139 33.4L141.6 30.6L142.6 35.6Z" fill="#dcdcdc"/></g><rect x="120.5" y=".4" width="30.3" height="3.2" fill="#8a8678" opacity=".75"/><text x="110.6" y="16.4" font-family="Liberation Sans, Noto Sans CJK SC, sans-serif" font-size="13" font-weight="900" fill="#e6c052">无敌战神</text><rect x="99.7" y="89.6" width="66.8" height="4.6" fill="#bdbdbd" opacity=".32"/><rect x="148" y="89.4" width="14" height="4.8" fill="#ededed" opacity=".4"/><rect x="104.7" y="96" width="56.8" height="4.4" fill="#d9a83c" opacity=".48"/></g><rect x="60" y="116" width="41.7" height="6" fill="#a9b2e4"/><rect x="68" y="117" width="28" height="5" fill="#e4e8f8" opacity=".7"/><rect x="178.8" y="116" width="41.7" height="6" fill="#bfa23c"/><rect x="190" y="117" width="24" height="5" fill="#e6d27a" opacity=".6"/></svg></div></div><div class="t" style="top:260.509px;height:18px;line-height:18px;font-size:12.2px;color:#454545;font-weight:bold;left:474.95px;width:600px;text-align:center;">无敌战神弹窗</div><div class="t" style="top:276.802px;height:18px;line-height:18px;font-size:12px;color:#666;left:474.95px;width:600px;text-align:center;">使用次数<span style="letter-spacing:0.086px;">: 0</span></div><div class="t" style="top:293.202px;height:18px;line-height:18px;font-size:12px;color:#666;left:474.95px;width:600px;text-align:center;">发布时间<span style="letter-spacing:0.529px;">: 2025-05-04</span></div><div style="left:22.7px;top:358.7px;width:275.3px;height:187.6px;background:#fffeff;border-radius:10px;overflow:hidden;box-shadow:0 2px 10px rgba(110,120,210,.10)"><div style="left:0px;top:0px;width:275.3px;height:121.2px;background:#000;overflow:hidden"></div></div><div class="t" style="top:488.409px;height:18px;line-height:18px;font-size:12.2px;color:#454545;font-weight:bold;left:-139.65px;width:600px;text-align:center;">R星特效转场</div><div class="t" style="top:504.702px;height:18px;line-height:18px;font-size:12px;color:#666;left:-139.65px;width:600px;text-align:center;">使用次数<span style="letter-spacing:0.086px;">: 2</span></div><div class="t" style="top:521.102px;height:18px;line-height:18px;font-size:12px;color:#666;left:-139.65px;width:600px;text-align:center;">发布时间<span style="letter-spacing:0.529px;">: 2025-05-04</span></div><div style="left:330px;top:358.7px;width:275.3px;height:187.6px;background:#fffeff;border-radius:10px;overflow:hidden;box-shadow:0 2px 10px rgba(110,120,210,.10)"><div style="left:0px;top:0px;width:275.3px;height:121.2px;background:#000;overflow:hidden"></div></div><div class="t" style="top:488.409px;height:18px;line-height:18px;font-size:12.2px;color:#454545;font-weight:bold;left:167.65px;width:600px;text-align:center;">欢直播间迎大哥</div><div class="t" style="top:504.702px;height:18px;line-height:18px;font-size:12px;color:#666;left:167.65px;width:600px;text-align:center;">使用次数<span style="letter-spacing:0.086px;">: 1</span></div><div class="t" style="top:521.102px;height:18px;line-height:18px;font-size:12px;color:#666;left:167.65px;width:600px;text-align:center;">发布时间<span style="letter-spacing:0.529px;">: 2025-05-04</span></div><div style="left:637.3px;top:358.7px;width:275.3px;height:187.6px;background:#fffeff;border-radius:10px;overflow:hidden;box-shadow:0 2px 10px rgba(110,120,210,.10)"><div style="left:0px;top:0px;width:275.3px;height:121.2px;background:#000;overflow:hidden"><svg class="a" style="left:0;top:0" width="275.3" height="121.2" viewBox="0 0 275.3 121.2"><defs><filter id="bl" x="-10%" y="-10%" width="120%" height="120%"><feGaussianBlur stdDeviation=".7"/></filter><linearGradient id="chest" x1="0" y1="0" x2="0" y2="1"><stop offset="0" stop-color="#f4efe8"/><stop offset="1" stop-color="#e6ddd2"/></linearGradient></defs><g filter="url(#bl)"><path d="M125 121.2C125 108 130 100 138 96L139 84H166L167 96C172 100 172.8 108 172.8 121.2Z" fill="url(#chest)"/><path d="M137.5 51C132 46.5 125 51 123.2 58C122.4 64 126 68.4 131 68C134 66 136 60 137.8 54.5Z" fill="#b8733a"/><path d="M137 52C134 55 133 60 134 65L137.5 56Z" fill="#6e3420"/><path d="M164.6 51C170.5 46.5 178.4 52 180.4 60C181.2 67 177 70.8 172 70C168 67 166 60 164.2 54.5Z" fill="#b8733a"/><path d="M165 52C168 56 169 61 168 66L164.6 56Z" fill="#6e3420"/><path d="M134 60C134 54 141 51.5 151 51.5C161 51.5 168 54 168 60C169 70 167 80 162 86C158 89 144 89 140 86C135 80 133 70 134 60Z" fill="#c98d55"/><path d="M147 52C149 51.5 153 51.5 155 52C156 58 158 62 161 66C164 72 164 80 161 85C157 88 145 88 141 85C138 80 138 72 141 66C144 62 146 58 147 52Z" fill="#f4efe9"/><ellipse cx="141.5" cy="62.5" rx="2.6" ry="1.5" fill="#5a3420"/><ellipse cx="160.5" cy="62.5" rx="2.6" ry="1.5" fill="#5a3420"/><ellipse cx="150.8" cy="68.4" rx="5.6" ry="4.4" fill="#15100e"/><path d="M141 76C146 74 156 74 161.5 76C161 82 158 87 151 87C145 87 141.5 82 141 76Z" fill="#24100e"/><path d="M143.5 84C145 82 157 82 158.8 84C158.8 92 157 100 153.5 104C151.5 105.6 149.5 105 148 103C145 98 143.5 91 143.5 84Z" fill="#d78d98"/><path d="M151 85V100" stroke="#b86a78" stroke-width=".8" fill="none"/></g></svg></div></div><div class="t" style="top:488.409px;height:18px;line-height:18px;font-size:12.2px;color:#454545;font-weight:bold;left:474.95px;width:600px;text-align:center;">傻狗笑</div><div class="t" style="top:504.702px;height:18px;line-height:18px;font-size:12px;color:#666;left:474.95px;width:600px;text-align:center;">使用次数<span style="letter-spacing:0.086px;">: 6</span></div><div class="t" style="top:521.102px;height:18px;line-height:18px;font-size:12px;color:#666;left:474.95px;width:600px;text-align:center;">发布时间<span style="letter-spacing:0.529px;">: 2025-05-04</span></div><div style="left:22.7px;top:586.1px;width:275.3px;height:187.6px;background:#fffeff;border-radius:10px;overflow:hidden;box-shadow:0 2px 10px rgba(110,120,210,.10)"><div style="left:0px;top:0px;width:275.3px;height:121.2px;background:#000;overflow:hidden"><svg class="a" style="left:0;top:0" width="275.3" height="121.2" viewBox="0 0 275.3 121.2"><defs><radialGradient id="g7" cx=".5" cy=".45" r=".8"><stop offset="0" stop-color="#0c0b0e"/><stop offset="1" stop-color="#09080b"/></radialGradient></defs><rect width="275.3" height="121.2" fill="url(#g7)"/><g stroke="#2c2c30" stroke-width=".9" opacity=".4"><path d="M60 10L48 52"/><path d="M120 30L112 70"/><path d="M210 20L200 64"/><path d="M160 60L150 110"/><path d="M80 70L70 118"/><path d="M240 50L232 96"/><path d="M30 40L24 80"/></g></svg></div></div><div style="left:330px;top:586.1px;width:275.3px;height:187.6px;background:#fffeff;border-radius:10px;overflow:hidden;box-shadow:0 2px 10px rgba(110,120,210,.10)"><div style="left:0px;top:0px;width:275.3px;height:121.2px;background:#000;overflow:hidden"><svg class="a" style="left:0;top:0" width="275.3" height="121.2" viewBox="0 0 275.3 121.2"><defs><radialGradient id="g8" gradientUnits="userSpaceOnUse" cx="137.6" cy="60.6" r="152"><stop offset="0" stop-color="#060607"/><stop offset=".5" stop-color="#0a0a0c"/><stop offset=".7" stop-color="#19191c"/><stop offset=".86" stop-color="#2c2c30"/><stop offset="1" stop-color="#3a3a3e"/></radialGradient><filter id="b8"><feGaussianBlur stdDeviation=".9"/></filter></defs><rect width="275.3" height="121.2" fill="url(#g8)"/><g fill="none" stroke="#77777d" stroke-width="1.8" opacity=".32" filter="url(#b8)"><circle cx="137.6" cy="60.6" r="112" stroke-dasharray="40 25 60 30"/><circle cx="137.6" cy="60.6" r="121" stroke-dasharray="70 20 30 40" stroke-dashoffset="30"/><circle cx="137.6" cy="60.6" r="129" stroke-dasharray="50 18 80 26" stroke-dashoffset="10"/><circle cx="137.6" cy="60.6" r="136" stroke-dasharray="90 30 40 20" stroke-dashoffset="55"/><circle cx="137.6" cy="60.6" r="103" stroke-dasharray="30 40 50 60" stroke-dashoffset="20" opacity=".6"/></g><g transform="translate(94.5 -34.3) scale(5.14 5.29)"><path d="M24 7.8L6.442 15.276c-1.456.616-2.679.925-3.668.925-1.12 0-1.933-.392-2.437-1.177-.317-.504-.41-1.143-.28-1.918.13-.775.476-1.6 1.036-2.478.467-.71 1.232-1.643 2.297-2.8a6.122 6.122 0 00-.784 1.848c-.28 1.195-.028 2.072.756 2.632.373.261.886.392 1.54.392.522 0 1.11-.084 1.764-.252L24 7.8z" fill="#fff"/></g><text x="138" y="88.3" text-anchor="middle" font-family="Liberation Sans" font-weight="bold" font-style="italic" font-size="36.4" fill="#fff" stroke="#fff" stroke-width="1.3" textLength="205" lengthAdjust="spacingAndGlyphs">JUST DO IT.</text><g transform="translate(102 95.8) skewX(-11)"><text x="0" y="16.7" font-family="Liberation Sans, Noto Sans CJK SC, sans-serif" font-size="19" font-weight="900" fill="#fff">勇敢去做</text></g><g fill="#8a8a90" opacity=".6"><rect x="76" y="10" width="2" height="1"/><rect x="45" y="26.5" width="2.4" height="1"/><rect x="50" y="43" width="3" height="1"/><rect x="196" y="109" width="4" height="1.2"/></g></svg></div></div><div style="left:637.3px;top:586.1px;width:275.3px;height:187.6px;background:#fffeff;border-radius:10px;overflow:hidden;box-shadow:0 2px 10px rgba(110,120,210,.10)"><div style="left:0px;top:0px;width:275.3px;height:121.2px;background:#000;overflow:hidden"><svg class="a" style="left:0;top:0" width="275.3" height="121.2" viewBox="0 0 275.3 121.2"><defs><radialGradient id="g9" cx=".47" cy=".36" r=".62" gradientTransform="matrix(1 0 0 .75 0 .09)"><stop offset="0" stop-color="#010002"/><stop offset=".6" stop-color="#030104"/><stop offset="1" stop-color="#0d0814"/></radialGradient><linearGradient id="g9b" x1="0" y1="0" x2="0" y2="1"><stop offset=".5" stop-color="#1a0f2a" stop-opacity="0"/><stop offset="1" stop-color="#1d1230" stop-opacity=".95"/></linearGradient><radialGradient id="g9c" cx=".83" cy="-.02" r=".07"><stop offset="0" stop-color="#3030a0" stop-opacity=".8"/><stop offset="1" stop-color="#202080" stop-opacity="0"/></radialGradient></defs><rect width="275.3" height="121.2" fill="url(#g9)"/><rect width="275.3" height="121.2" fill="url(#g9b)"/><rect width="275.3" height="121.2" fill="url(#g9c)"/><g fill="#6a5a9a" opacity=".6"><rect x="160" y="8" width="1.6" height="1.4"/><rect x="100" y="106" width="2" height="2"/><rect x="162" y="104" width="2" height="2"/><rect x="138" y="51" width="1.5" height="1.5"/><rect x="152" y="80" width="1.4" height="1.4"/><rect x="250" y="107" width="1.6" height="1.6"/><rect x="209" y="118" width="2" height="2"/></g></svg></div></div><div style="left:909.9px;top:0px;width:13.1px;height:730px;background:#fbfbfc"></div><div style="left:0px;top:717.2px;width:923px;height:12.8px;background:#fbfbfc"></div><div style="left:913.2px;top:16px;width:7.4px;height:556px;background:#8b8b8d;border-radius:3.7px"></div><div style="left:16px;top:719.9px;width:875px;height:7.2px;background:#8b8b8d;border-radius:3.6px"></div><svg class="a" style="left:912.8px;top:5.3px" width="8.2" height="4.8" viewBox="0 0 8.2 4.8"><path d="M0 4.8L4.1 0L8.2 4.8Z" fill="#868688"/></svg><svg class="a" style="left:912.9px;top:706.4px" width="7.6" height="4.6" viewBox="0 0 7.6 4.6"><path d="M0 0H7.6L3.8 4.6Z" fill="#868688"/></svg><svg class="a" style="left:4.4px;top:719.4px" width="4.6" height="8.2" viewBox="0 0 4.6 8.2"><path d="M4.6 0V8.2L0 4.1Z" fill="#868688"/></svg><svg class="a" style="left:900.7px;top:719.6px" width="4.4" height="7.8" viewBox="0 0 4.4 7.8"><path d="M0 0V7.8L4.4 3.9Z" fill="#868688"/></svg></div></body></html>
